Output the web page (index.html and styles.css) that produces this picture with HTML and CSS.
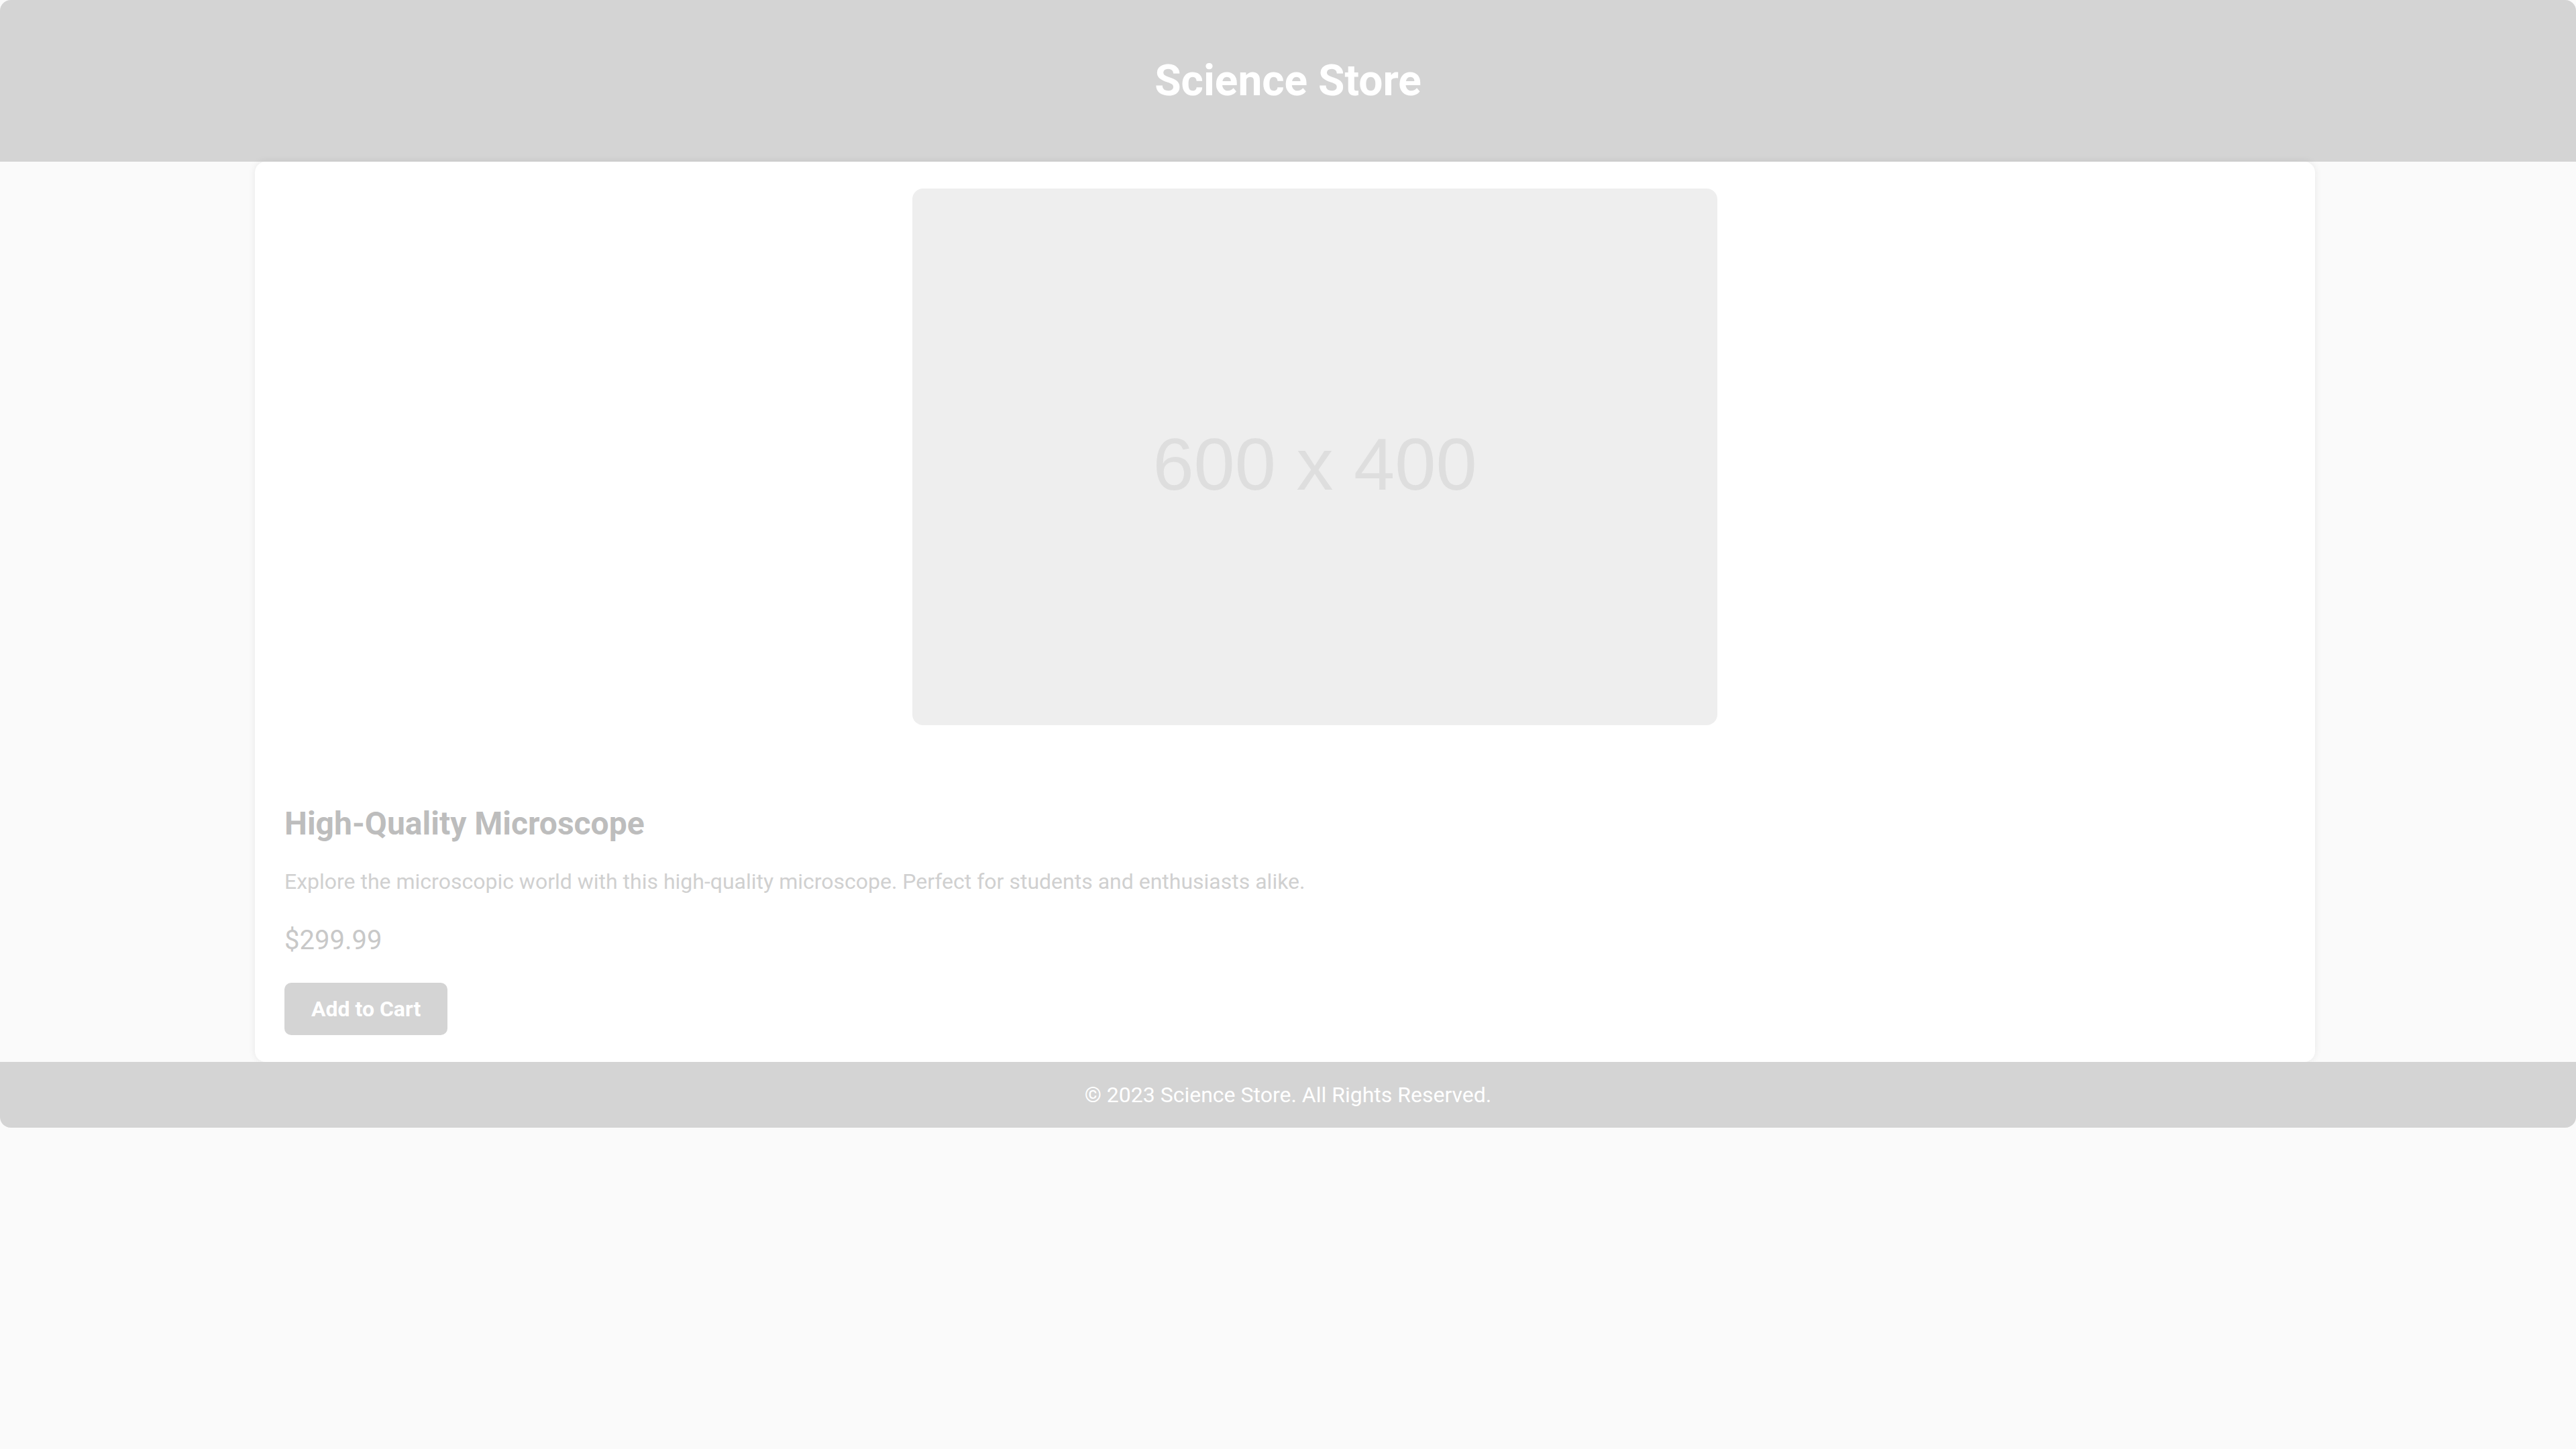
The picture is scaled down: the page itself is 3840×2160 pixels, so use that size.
FILE: index.html
```html
<!DOCTYPE html>
<html lang="en">
<head>
<meta charset="utf-8">
<title>Science Store</title>
<link rel="stylesheet" href="styles.css">
</head>
<body>
<header class="site-header">
  <h1 class="site-title">Science Store</h1>
</header>
<main class="product-card">
  <div class="product-media">
    <div class="placeholder">600 x 400</div>
  </div>
  <h2 class="product-name">High-Quality Microscope</h2>
  <p class="product-desc">Explore the microscopic world with this high-quality microscope. Perfect for students and enthusiasts alike.</p>
  <p class="product-price">$299.99</p>
  <button class="add-btn" type="button">Add to Cart</button>
</main>
<footer class="site-footer">
  <p class="footer-text">© 2023 Science Store. All Rights Reserved.</p>
</footer>
</body>
</html>
```

FILE: styles.css
```css
html, body {
  margin: 0;
  padding: 0;
}
body {
  background: #fafafa;
  font-family: Roboto, "Liberation Sans", Arial, sans-serif;
  min-height: 2160px;
}
.site-header {
  background: #d4d4d4;
  padding: 40px 0;
  text-align: center;
  border-radius: 16px 16px 0 0;
}
.site-title {
  margin: 43px 0;
  font-size: 64px;
  font-weight: 700;
  line-height: 75px;
  color: #ffffff;
}
.product-card {
  box-sizing: border-box;
  width: 3071px;
  margin: 0 0 0 380px;
  padding: 40px 40px 40px 44px;
  background: #ffffff;
  border-radius: 16px;
  box-shadow: 0 0 12px rgba(0, 0, 0, 0.08);
  display: flex;
  flex-direction: column;
  align-items: flex-start;
}
.product-media {
  align-self: stretch;
  display: flex;
  justify-content: center;
  padding-left: 85px;
  margin-bottom: 119px;
}
.placeholder {
  box-sizing: border-box;
  width: 1200px;
  height: 800px;
  padding-top: 20px;
  background: #eeeeee;
  border-radius: 16px;
  display: flex;
  align-items: center;
  justify-content: center;
  font-family: "Liberation Sans", Arial, sans-serif;
  font-size: 110px;
  color: #dedede;
}
.product-name {
  margin: 0 0 40px;
  font-size: 48px;
  font-weight: 700;
  line-height: 56px;
  color: #bdbdbd;
}
.product-desc {
  margin: 0 0 45px;
  font-size: 32px;
  line-height: 37px;
  color: #d0d0d0;
}
.product-price {
  margin: 0 0 40px;
  font-size: 40px;
  line-height: 47px;
  color: #c8c8c8;
}
.add-btn {
  border: none;
  background: #d4d4d4;
  color: #ffffff;
  font-family: Roboto, "Liberation Sans", Arial, sans-serif;
  font-size: 32px;
  font-weight: 700;
  line-height: 38px;
  padding: 20px 40px;
  border-radius: 10px;
  cursor: pointer;
}
.site-footer {
  background: #d4d4d4;
  padding: 30px 0;
  text-align: center;
  border-radius: 0 0 16px 16px;
}
.footer-text {
  margin: 0;
  font-size: 32px;
  line-height: 38px;
  color: #ffffff;
}
```
